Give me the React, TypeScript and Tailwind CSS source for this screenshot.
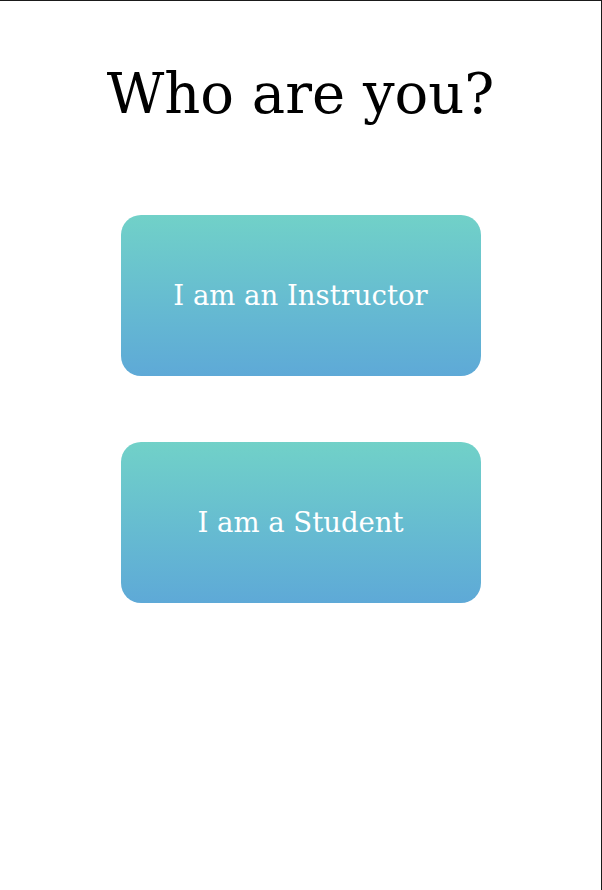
export default function App() {
  const roles = ["I am an Instructor", "I am a Student"];

  return (
    <div
      className="h-[890px] w-[602px] overflow-hidden border-t border-r border-[#1a1a1a] bg-white"
      style={{ fontFamily: '"Roboto Slab", "DejaVu Serif", serif' }}
    >
      <div className="flex flex-col items-center">
        <h1 className="mt-[57px] text-[56px] leading-[72px] text-black">Who are you?</h1>

        <div className="mt-[85px] flex flex-col gap-[66px]">
          {roles.map((role) => (
            <button
              key={role}
              className="flex h-[161px] w-[360px] items-center justify-center rounded-[20px] bg-gradient-to-b from-[#71d1c8] to-[#5ea9d7] text-[27.5px] text-white"
            >
              {role}
            </button>
          ))}
        </div>
      </div>
    </div>
  );
}
